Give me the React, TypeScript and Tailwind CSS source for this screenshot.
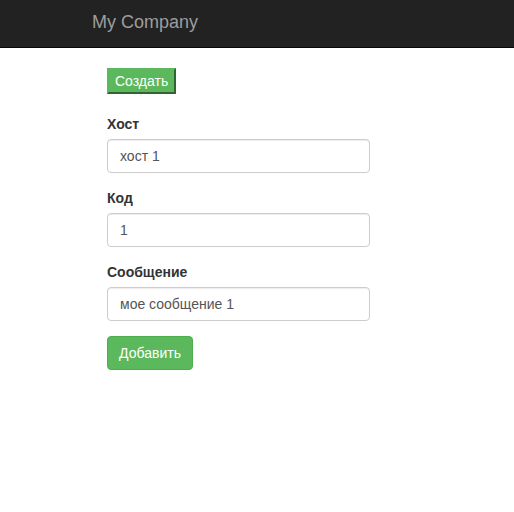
export default function App() {
  const font = { fontFamily: '"Liberation Sans", Arial, sans-serif' };
  const fields = [
    { label: "Хост", value: "хост 1" },
    { label: "Код", value: "1" },
    { label: "Сообщение", value: "мое сообщение 1" },
  ];
  return (
    <div className="min-h-[512px] bg-white font-['Liberation_Sans',Arial,sans-serif]" style={font}>
      <div className="h-[48px] bg-[#222222] border-b border-[#080808]">
        <div className="pl-[92px] pt-[12px] text-[18px] leading-[20px] text-[#9d9d9d]">My Company</div>
      </div>
      <div className="pl-[107px] pt-[20px]">
        <button className="h-[26px] px-[6px] bg-[#5cb85c] text-white text-[14px] leading-[18px] border-2 border-[#5cb85c] [border-style:outset]">
          Создать
        </button>
        <div className="mt-[20px]">
          {fields.map((f) => (
            <div key={f.label} className="mb-[15px]">
              <div className="mb-[5px] text-[14px] leading-[20px] font-bold text-[#333333]">{f.label}</div>
              <input
                readOnly
                value={f.value}
                className="block h-[34px] w-[263px] px-[12px] border border-[#cccccc] rounded-[4px] text-[14px] text-[#555555] shadow-[inset_0_1px_1px_rgba(0,0,0,0.075)] outline-none"
              />
            </div>
          ))}
          <button className="h-[34px] w-[86px] bg-[#5cb85c] border border-[#4cae4c] rounded-[4px] text-white text-[14px] leading-[20px]">
            Добавить
          </button>
        </div>
      </div>
    </div>
  );
}
